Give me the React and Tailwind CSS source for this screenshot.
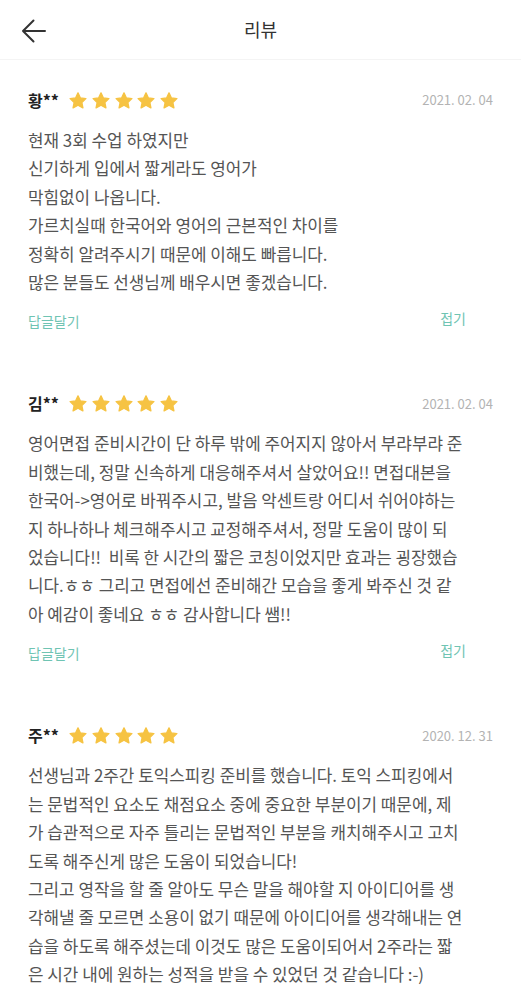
import React from 'react';

const reviews = [
    {
        name: '황**',
        date: '2021. 02. 04',
        lines: [
            '현재 3회 수업 하였지만',
            '신기하게 입에서 짧게라도 영어가',
            '막힘없이 나옵니다.',
            '가르치실때 한국어와 영어의 근본적인 차이를',
            '정확히 알려주시기 때문에 이해도 빠릅니다.',
            '많은 분들도 선생님께 배우시면 좋겠습니다.',
        ],
        footer: true,
    },
    {
        name: '김**',
        date: '2021. 02. 04',
        lines: [
            '영어면접 준비시간이 단 하루 밖에 주어지지 않아서 부랴부랴 준',
            '비했는데, 정말 신속하게 대응해주셔서 살았어요!! 면접대본을',
            '한국어->영어로 바꿔주시고, 발음 악센트랑 어디서 쉬어야하는',
            '지 하나하나 체크해주시고 교정해주셔서, 정말 도움이 많이 되',
            '었습니다!!  비록 한 시간의 짧은 코칭이었지만 효과는 굉장했습',
            '니다.ㅎㅎ 그리고 면접에선 준비해간 모습을 좋게 봐주신 것 같',
            '아 예감이 좋네요 ㅎㅎ 감사합니다 쌤!!',
        ],
        footer: true,
    },
    {
        name: '주**',
        date: '2020. 12. 31',
        lines: [
            '선생님과 2주간 토익스피킹 준비를 했습니다. 토익 스피킹에서',
            '는 문법적인 요소도 채점요소 중에 중요한 부분이기 때문에, 제',
            '가 습관적으로 자주 틀리는 문법적인 부분을 캐치해주시고 고치',
            '도록 해주신게 많은 도움이 되었습니다!',
            '그리고 영작을 할 줄 알아도 무슨 말을 해야할 지 아이디어를 생',
            '각해낼 줄 모르면 소용이 없기 때문에 아이디어를 생각해내는 연',
            '습을 하도록 해주셨는데 이것도 많은 도움이되어서 2주라는 짧',
            '은 시간 내에 원하는 성적을 받을 수 있었던 것 같습니다 :-)',
        ],
        footer: false,
    },
];

function Star() {
    return (
        <svg width="20" height="20" viewBox="0 0 24 24">
            <path
                d="M12 2.2l2.9 6.1 6.6.8-4.9 4.6 1.3 6.6L12 17l-5.9 3.3 1.3-6.6-4.9-4.6 6.6-.8z"
                fill="#f6c343"
                stroke="#f6c343"
                strokeWidth="1.6"
                strokeLinejoin="round"
            />
        </svg>
    );
}

function Review({ review }) {
    return (
        <section className="px-[28px] pt-[28px] pb-[32px]">
            <div className="flex h-[24px] items-center">
                <span className="text-[16px] font-bold text-[#222]">{review.name}</span>
                <div className="ml-[9px] mt-[2px] flex gap-[2.8px]">
                    <Star />
                    <Star />
                    <Star />
                    <Star />
                    <Star />
                </div>
                <span className="ml-auto text-[13px] text-[#b3b3b3]">{review.date}</span>
            </div>
            <div className="mt-[14px] text-[16.9px] leading-[28.4px] text-[#555]">
                {review.lines.map((line, i) => (
                    <div key={i} className="whitespace-pre">{line}</div>
                ))}
            </div>
            {review.footer && (
                <div className="mt-[15px] flex h-[20px] items-center justify-between text-[14px] text-[#6fc4b3]">
                    <span>답글달기</span>
                    <span className="mr-[27px] -mt-[6px]">접기</span>
                </div>
            )}
        </section>
    );
}

export default function App() {
    return (
        <div className="min-h-screen bg-white font-['Noto_Sans_CJK_KR',sans-serif]">
            {/* Header */}
            <header className="relative flex h-[60px] items-center justify-center border-b border-[#f4f4f4]">
                <button className="absolute left-[20px] top-[18px]">
                    <svg width="27" height="26" viewBox="0 0 27 26" fill="none" stroke="#333" strokeWidth="2" strokeLinecap="round" strokeLinejoin="round">
                        <path d="M25 13H3M13.5 2.5L3 13l10.5 10.5" />
                    </svg>
                </button>
                <h1 className="text-[18px] text-[#333]">리뷰</h1>
            </header>

            {reviews.map((r, i) => (
                <Review key={i} review={r} />
            ))}
        </div>
    );
}
